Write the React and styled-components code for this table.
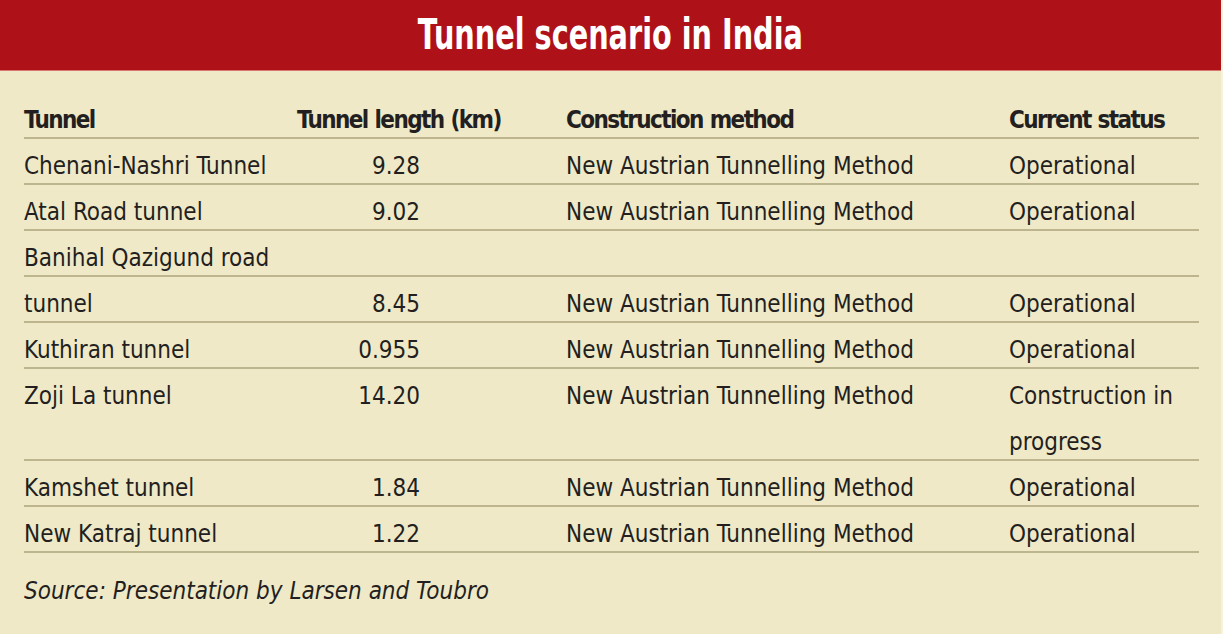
import React from "react";
import styled, { createGlobalStyle } from "styled-components";

const Global = createGlobalStyle`
  html, body { margin: 0; padding: 0; background: #efe9c8; }
  #root { width: 1223px; height: 634px; }
`;

const FONT = `"Liberation Sans Narrow", "DejaVu Sans Condensed", "Liberation Sans", sans-serif`;

const Panel = styled.div`
  width: 1223px;
  height: 634px;
  background: #efe9c8;
  display: flex;
  flex-direction: column;
  font-family: ${FONT};
  color: #231f20;
  box-sizing: border-box;
  border-right: 2px solid #f6f2dc;
`;

const TitleBar = styled.header`
  height: 70px;
  background: #ae1117;
  border-top: 1px solid #b83a3e;
  border-bottom: 1px solid #d8776f;
  box-sizing: content-box;
  display: flex;
  align-items: center;
  justify-content: center;
  margin-top: -1px;
`;

const Title = styled.h1`
  margin: 0;
  color: #ffffff;
  font-family: ${FONT};
  font-weight: 700;
  font-size: 42px;
  line-height: 70px;
  transform: scaleX(0.76);
  white-space: nowrap;
`;

const Body = styled.div`
  padding: 26px 0 0 24px;
`;

const Table = styled.table`
  border-collapse: collapse;
  table-layout: fixed;
  width: 1175px;
`;

const cellBase = `
  padding: 0;
  font-size: 24px;
  line-height: 46px;
  white-space: nowrap;
  vertical-align: top;
  background: linear-gradient(#bcb58e, #bcb58e) left 0 bottom 4px / 100% 2px no-repeat;
`;

const HeadCell = styled.th`
  ${cellBase}
  font-weight: 700;
  text-align: left;
  letter-spacing: -1.6px;
  word-spacing: 1px;
`;

const Cell = styled.td`
  ${cellBase}
  font-weight: 400;
  text-align: ${(p) => (p.$num ? "right" : "left")};
  padding-right: ${(p) => (p.$num ? "146px" : "0")};
`;

const Source = styled.p`
  margin: 11px 0 0;
  font-style: italic;
  font-size: 24px;
  line-height: 46px;
`;

const rows = [
  ["Chenani-Nashri Tunnel", "9.28", "New Austrian Tunnelling Method", "Operational"],
  ["Atal Road tunnel", "9.02", "New Austrian Tunnelling Method", "Operational"],
  ["Banihal Qazigund road", "", "", ""],
  ["tunnel", "8.45", "New Austrian Tunnelling Method", "Operational"],
  ["Kuthiran tunnel", "0.955", "New Austrian Tunnelling Method", "Operational"],
  ["Zoji La tunnel", "14.20", "New Austrian Tunnelling Method", ["Construction in", "progress"]],
  ["Kamshet tunnel", "1.84", "New Austrian Tunnelling Method", "Operational"],
  ["New Katraj tunnel", "1.22", "New Austrian Tunnelling Method", "Operational"],
];

export default function App() {
  return (
    <>
      <Global />
      <Panel>
        <TitleBar>
          <Title>Tunnel scenario in India</Title>
        </TitleBar>
        <Body>
          <Table>
            <colgroup>
              <col style={{ width: 273 }} />
              <col style={{ width: 269 }} />
              <col style={{ width: 443 }} />
              <col style={{ width: 190 }} />
            </colgroup>
            <thead>
              <tr>
                <HeadCell>Tunnel</HeadCell>
                <HeadCell>Tunnel length (km)</HeadCell>
                <HeadCell>Construction method</HeadCell>
                <HeadCell>Current status</HeadCell>
              </tr>
            </thead>
            <tbody>
              {rows.map((r, i) => (
                <tr key={i}>
                  <Cell>{r[0]}</Cell>
                  <Cell $num>{r[1]}</Cell>
                  <Cell>{r[2]}</Cell>
                  <Cell>
                    {Array.isArray(r[3])
                      ? r[3].map((l, j) => <div key={j}>{l}</div>)
                      : r[3]}
                  </Cell>
                </tr>
              ))}
            </tbody>
          </Table>
          <Source>Source: Presentation by Larsen and Toubro</Source>
        </Body>
      </Panel>
    </>
  );
}
